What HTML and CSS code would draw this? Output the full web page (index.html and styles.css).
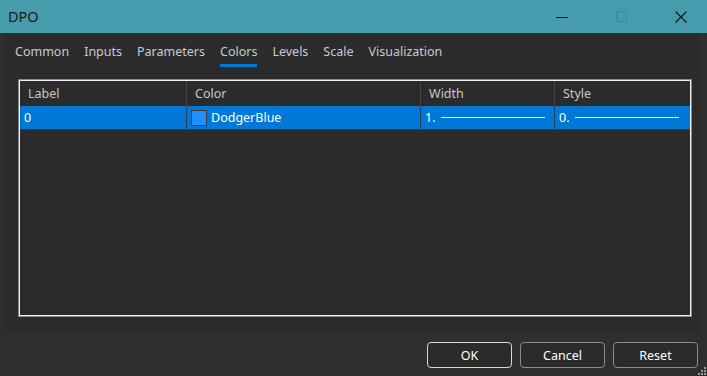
FILE: index.html
```html
<!DOCTYPE html>
<html>
<head>
<meta charset="utf-8">
<link rel="stylesheet" href="styles.css">
</head>
<body>
<div class="titlebar">
  <div class="title">DPO</div>
  <div class="controls">
    <svg class="ctl ctl-min" width="14" height="14" viewBox="0 0 14 14"><path d="M0 7.5H12" stroke="#111" stroke-width="1"/></svg>
    <svg class="ctl ctl-max" width="14" height="14" viewBox="0 0 14 14"><rect x="1.5" y="1.5" width="10" height="10" rx="1" fill="none" stroke="#3a8797" stroke-width="1"/></svg>
    <svg class="ctl ctl-close" width="14" height="14" viewBox="0 0 14 14"><path d="M1.5 1.5L12.5 12.5M12.5 1.5L1.5 12.5" stroke="#111" stroke-width="1.1"/></svg>
  </div>
</div>
<div class="panel">
  <div class="tabs">
    <span class="tab">Common</span>
    <span class="tab">Inputs</span>
    <span class="tab">Parameters</span>
    <span class="tab active">Colors</span>
    <span class="tab">Levels</span>
    <span class="tab">Scale</span>
    <span class="tab">Visualization</span>
  </div>
  <div class="table">
    <div class="thead">
      <div class="th">Label</div>
      <div class="th">Color</div>
      <div class="th">Width</div>
      <div class="th">Style</div>
    </div>
    <div class="tr">
      <div class="td">0</div>
      <div class="td"><span class="swatch"></span>DodgerBlue</div>
      <div class="td">1.<span class="line"></span></div>
      <div class="td">0.<span class="line"></span></div>
    </div>
  </div>
</div>
<div class="footer">
  <button class="btn btn-default">OK</button>
  <button class="btn">Cancel</button>
  <button class="btn">Reset</button>
  <svg class="grip" width="10" height="10" viewBox="0 0 10 10">
    <rect x="7" y="1" width="2" height="2" fill="#9a9a9a"/>
    <rect x="4" y="4" width="2" height="2" fill="#9a9a9a"/>
    <rect x="7" y="4" width="2" height="2" fill="#9a9a9a"/>
    <rect x="1" y="7" width="2" height="2" fill="#9a9a9a"/>
    <rect x="4" y="7" width="2" height="2" fill="#9a9a9a"/>
    <rect x="7" y="7" width="2" height="2" fill="#9a9a9a"/>
  </svg>
</div>
</body>
</html>
```
FILE: styles.css
```css
* { box-sizing: border-box; }
html, body {
  margin: 0;
  padding: 0;
  width: 707px;
  height: 376px;
  overflow: hidden;
}
body {
  background: #2f2f2f;
  font-family: "Noto Sans", "Open Sans", sans-serif;
  font-size: 12px;
  color: #e8e8e8;
}
.titlebar {
  height: 33px;
  background: #469cab;
  display: flex;
  align-items: center;
  justify-content: space-between;
}
.title {
  padding-left: 8px;
  font-size: 14.5px;
  color: #1a1a1a;
  padding-bottom: 1px;
}
.controls {
  display: flex;
  align-items: center;
  gap: 45px;
  padding-right: 19px;
}
.ctl { display: block; }
.panel {
  margin: 0 7px 0 5px;
  height: 300px;
  background: #2b2b2b;
  padding-top: 10px;
}
.tabs {
  display: flex;
  gap: 15px;
  padding-left: 10px;
  height: 36px;
}
.tab {
  color: #c6ccd4;
  font-size: 12.5px;
  line-height: 18px;
  height: 24px;
  border-bottom: 3px solid transparent;
}
.tab.active {
  border-bottom-color: #0078d7;
}
.table {
  margin-left: 13px;
  width: 674px;
  height: 238px;
  border: 1px solid #8a8a8a;
  box-shadow: inset 0 0 0 1px #f0f0f0;
  padding: 1px;
  background: #2b2b2b;
}
.thead, .tr {
  display: grid;
  grid-template-columns: 166px 234px 134px 1fr;
}
.thead { height: 25px; padding-top: 1px; }
.th {
  color: #c8c8c8;
  font-size: 12.5px;
  line-height: 24px;
  padding-left: 8px;
  border-left: 1px solid #464646;
}
.th:first-child { border-left: none; }
.tr {
  height: 24px;
  background: #0078d7;
  border-bottom: 1px solid #3a3a3a;
}
.td {
  color: #ffffff;
  font-size: 12.5px;
  line-height: 23px;
  padding-left: 4px;
  border-left: 1px solid #2e3a46;
  display: flex;
  align-items: center;
}
.td:first-child { border-left: none; }
.swatch {
  width: 16px;
  height: 16px;
  background: #1e90ff;
  border: 1px solid #3c3c3c;
  margin-right: 4px;
}
.line {
  flex: 0 0 104px;
  height: 1px;
  background: #ffffff;
  margin-left: 5px;
}
.footer {
  height: 43px;
  display: flex;
  align-items: center;
  justify-content: flex-end;
  gap: 8px;
  padding-right: 9px;
  padding-top: 1px;
  position: relative;
}
.btn {
  width: 85px;
  height: 26px;
  background: #2b2b2b;
  border: 1px solid #8c8c8c;
  border-radius: 4px;
  color: #ffffff;
  font-family: "Noto Sans", "Open Sans", sans-serif;
  font-size: 12.5px;
  padding: 0;
}
.btn-default { border-color: #d8d8d8; }
.grip {
  position: absolute;
  right: 0;
  bottom: 0;
}
```
